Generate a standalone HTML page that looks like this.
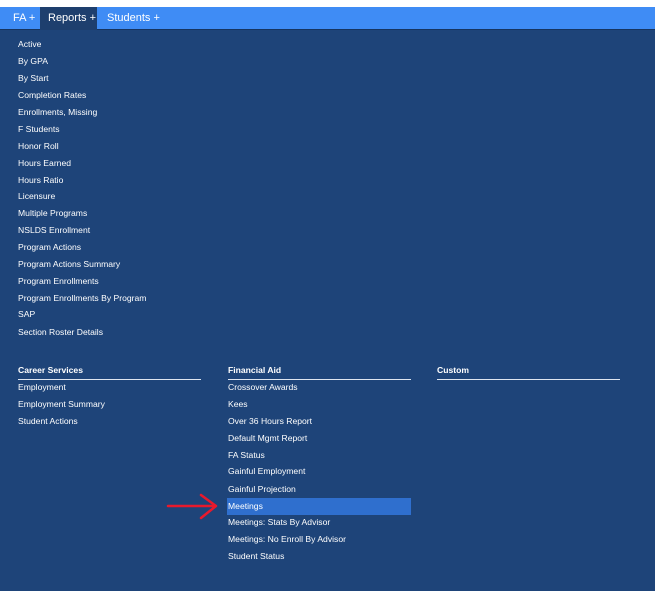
<!DOCTYPE html>
<html><head><style>
*{margin:0;padding:0;box-sizing:border-box}
body{width:655px;height:591px;background:#1e4479;font-family:"Liberation Sans",sans-serif;color:#fff;position:relative;overflow:hidden}
.top{position:absolute;left:0;top:0;width:655px;height:7px;background:#fff}
.bar{position:absolute;left:0;top:7px;width:655px;height:23px;background:#3f8cf5;border-bottom:1px solid #163460}
.bar span{position:absolute;top:0;height:23px;line-height:22px;font-size:11px}
.tab{background:#1e3f6e}
.i{position:absolute;font-size:8.6px;line-height:12px;white-space:nowrap}
.h{position:absolute;font-size:8.6px;font-weight:bold;width:183px;border-bottom:1px solid #dfe6f0;padding-bottom:3px;line-height:12px}
.hl{position:absolute;left:227px;top:498px;width:184px;height:17px;background:#2f6fce}
</style></head><body>
<div class="top"></div>
<div class="bar">
<span style="left:13px">FA +</span>
<span class="tab" style="left:40px;width:57px;padding-left:8px">Reports +</span>
<span style="left:107px">Students +</span>
</div>
<div class="i" style="left:18px;top:38px">Active</div>
<div class="i" style="left:18px;top:55px">By GPA</div>
<div class="i" style="left:18px;top:72px">By Start</div>
<div class="i" style="left:18px;top:89px">Completion Rates</div>
<div class="i" style="left:18px;top:106px">Enrollments, Missing</div>
<div class="i" style="left:18px;top:123px">F Students</div>
<div class="i" style="left:18px;top:140px">Honor Roll</div>
<div class="i" style="left:18px;top:157px">Hours Earned</div>
<div class="i" style="left:18px;top:174px">Hours Ratio</div>
<div class="i" style="left:18px;top:190px">Licensure</div>
<div class="i" style="left:18px;top:207px">Multiple Programs</div>
<div class="i" style="left:18px;top:224px">NSLDS Enrollment</div>
<div class="i" style="left:18px;top:241px">Program Actions</div>
<div class="i" style="left:18px;top:258px">Program Actions Summary</div>
<div class="i" style="left:18px;top:275px">Program Enrollments</div>
<div class="i" style="left:18px;top:292px">Program Enrollments By Program</div>
<div class="i" style="left:18px;top:308px">SAP</div>
<div class="i" style="left:18px;top:326px">Section Roster Details</div>

<div class="h" style="left:18px;top:364px">Career Services</div>
<div class="h" style="left:228px;top:364px">Financial Aid</div>
<div class="h" style="left:437px;top:364px">Custom</div>

<div class="i" style="left:18px;top:381px">Employment</div>
<div class="i" style="left:18px;top:398px">Employment Summary</div>
<div class="i" style="left:18px;top:415px">Student Actions</div>

<div class="hl"></div>
<div class="i" style="left:228px;top:381px">Crossover Awards</div>
<div class="i" style="left:228px;top:398px">Kees</div>
<div class="i" style="left:228px;top:415px">Over 36 Hours Report</div>
<div class="i" style="left:228px;top:432px">Default Mgmt Report</div>
<div class="i" style="left:228px;top:449px">FA Status</div>
<div class="i" style="left:228px;top:465px">Gainful Employment</div>
<div class="i" style="left:228px;top:483px">Gainful Projection</div>
<div class="i" style="left:228px;top:500px">Meetings</div>
<div class="i" style="left:228px;top:516px">Meetings: Stats By Advisor</div>
<div class="i" style="left:228px;top:533px">Meetings: No Enroll By Advisor</div>
<div class="i" style="left:228px;top:550px">Student Status</div>

<svg style="position:absolute;left:165px;top:492px" width="55" height="30" viewBox="0 0 55 30">
<path d="M3 14 H50 M36 3 L51 14 L36 26" stroke="#e8192c" stroke-width="2.5" fill="none" stroke-linecap="round" stroke-linejoin="round"/>
</svg>
</body></html>
